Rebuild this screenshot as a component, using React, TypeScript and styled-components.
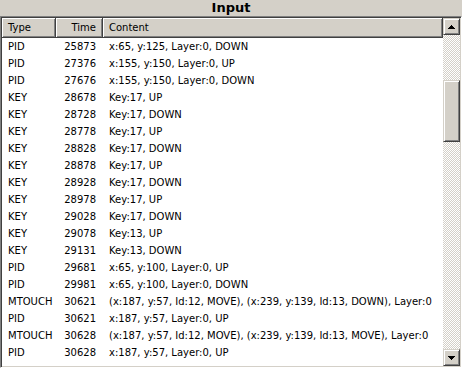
import styled, { createGlobalStyle } from "styled-components";

type Entry = { type: string; time: number; content: string };

const ROWS: Entry[] = [
  { type: "PID", time: 25873, content: "x:65, y:125, Layer:0, DOWN" },
  { type: "PID", time: 27376, content: "x:155, y:150, Layer:0, UP" },
  { type: "PID", time: 27676, content: "x:155, y:150, Layer:0, DOWN" },
  { type: "KEY", time: 28678, content: "Key:17, UP" },
  { type: "KEY", time: 28728, content: "Key:17, DOWN" },
  { type: "KEY", time: 28778, content: "Key:17, UP" },
  { type: "KEY", time: 28828, content: "Key:17, DOWN" },
  { type: "KEY", time: 28878, content: "Key:17, UP" },
  { type: "KEY", time: 28928, content: "Key:17, DOWN" },
  { type: "KEY", time: 28978, content: "Key:17, UP" },
  { type: "KEY", time: 29028, content: "Key:17, DOWN" },
  { type: "KEY", time: 29078, content: "Key:13, UP" },
  { type: "KEY", time: 29131, content: "Key:13, DOWN" },
  { type: "PID", time: 29681, content: "x:65, y:100, Layer:0, UP" },
  { type: "PID", time: 29981, content: "x:65, y:100, Layer:0, DOWN" },
  {
    type: "MTOUCH",
    time: 30621,
    content: "(x:187, y:57, Id:12, MOVE), (x:239, y:139, Id:13, DOWN), Layer:0",
  },
  { type: "PID", time: 30621, content: "x:187, y:57, Layer:0, UP" },
  {
    type: "MTOUCH",
    time: 30628,
    content: "(x:187, y:57, Id:12, MOVE), (x:239, y:139, Id:13, MOVE), Layer:0",
  },
  { type: "PID", time: 30628, content: "x:187, y:57, Layer:0, UP" },
];

const COLUMNS = "54px 47px 1fr";

const Global = createGlobalStyle`
  html, body {
    margin: 0;
    padding: 0;
    background: #d4d0c8;
  }
  body {
    font-family: "DejaVu Sans", Tahoma, sans-serif;
    font-size: 10px;
    color: #000;
  }
`;

const Window = styled.div`
  width: 462px;
  height: 368px;
  display: flex;
  flex-direction: column;
  background: #d4d0c8;
  overflow: hidden;
`;

const Title = styled.div`
  height: 16px;
  line-height: 16px;
  text-align: center;
  font-family: "DejaVu Sans", Tahoma, sans-serif;
  font-weight: bold;
  font-size: 13px;
`;

const ListBox = styled.div`
  flex: 1;
  display: flex;
  min-height: 0;
  border-style: solid;
  border-width: 1px;
  border-color: #808080 #ffffff #ffffff #808080;
  box-shadow: inset 1px 1px #404040, inset -1px -1px #d4d0c8;
  padding: 1px;
  background: #fff;
`;

const Table = styled.div`
  flex: 1;
  display: flex;
  flex-direction: column;
  overflow: hidden;
  background: #fff;
`;

const HeaderRow = styled.div`
  display: grid;
  grid-template-columns: ${COLUMNS};
  height: 20px;
  flex: none;
`;

const HeaderCell = styled.div<{ $align?: "left" | "right" }>`
  background: #d4d0c8;
  box-shadow: inset -1px -1px #404040, inset 1px 1px #fff,
    inset -2px -2px #808080;
  line-height: 20px;
  font-size: 10px;
  white-space: nowrap;
  overflow: hidden;
  text-align: ${(p) => p.$align ?? "left"};
  padding: 0 ${(p) => (p.$align === "right" ? "7px" : "0")} 0
    ${(p) => (p.$align === "right" ? "0" : "6px")};
`;

const Row = styled.div`
  display: grid;
  grid-template-columns: ${COLUMNS};
  height: 17px;
  line-height: 17px;
  flex: none;
`;

const Cell = styled.div<{ $align?: "left" | "right" }>`
  white-space: nowrap;
  overflow: hidden;
  text-align: ${(p) => p.$align ?? "left"};
  padding: 0 ${(p) => (p.$align === "right" ? "7px" : "0")} 0
    ${(p) => (p.$align === "right" ? "0" : "6px")};
`;

const ScrollBar = styled.div`
  width: 17px;
  flex: none;
  display: flex;
  flex-direction: column;
`;

const Track = styled.div`
  flex: 1;
  background: repeating-conic-gradient(#d4d0c8 0% 25%, #ffffff 0% 50%) 0 0 /
    2px 2px;
`;

const ArrowButton = styled.div`
  height: 17px;
  flex: none;
  display: flex;
  align-items: center;
  justify-content: center;
  background: #d4d0c8;
  border-style: solid;
  border-width: 1px;
  border-color: #d4d0c8 #404040 #404040 #d4d0c8;
  box-shadow: inset 1px 1px #fff, inset -1px -1px #808080;
  box-sizing: border-box;
`;

const Thumb = styled.div`
  margin-top: 45px;
  height: 62px;
  background: #d4d0c8;
  border-style: solid;
  border-width: 1px;
  border-color: #d4d0c8 #404040 #404040 #d4d0c8;
  box-shadow: inset 1px 1px #fff, inset -1px -1px #808080;
  box-sizing: border-box;
`;

function Arrow({ up }: { up: boolean }) {
  return (
    <svg width="7" height="4" viewBox="0 0 7 4">
      <polygon
        points={up ? "3.5,0 7,4 0,4" : "0,0 7,0 3.5,4"}
        fill="#000"
        shapeRendering="crispEdges"
      />
    </svg>
  );
}

export default function App() {
  return (
    <Window>
      <Global />
      <Title>Input</Title>
      <ListBox>
        <Table>
          <HeaderRow>
            <HeaderCell>Type</HeaderCell>
            <HeaderCell $align="right">Time</HeaderCell>
            <HeaderCell>Content</HeaderCell>
          </HeaderRow>
          {ROWS.map((r, i) => (
            <Row key={i}>
              <Cell>{r.type}</Cell>
              <Cell $align="right">{r.time}</Cell>
              <Cell>{r.content}</Cell>
            </Row>
          ))}
        </Table>
        <ScrollBar>
          <ArrowButton>
            <Arrow up />
          </ArrowButton>
          <Track>
            <Thumb />
          </Track>
          <ArrowButton>
            <Arrow up={false} />
          </ArrowButton>
        </ScrollBar>
      </ListBox>
    </Window>
  );
}
